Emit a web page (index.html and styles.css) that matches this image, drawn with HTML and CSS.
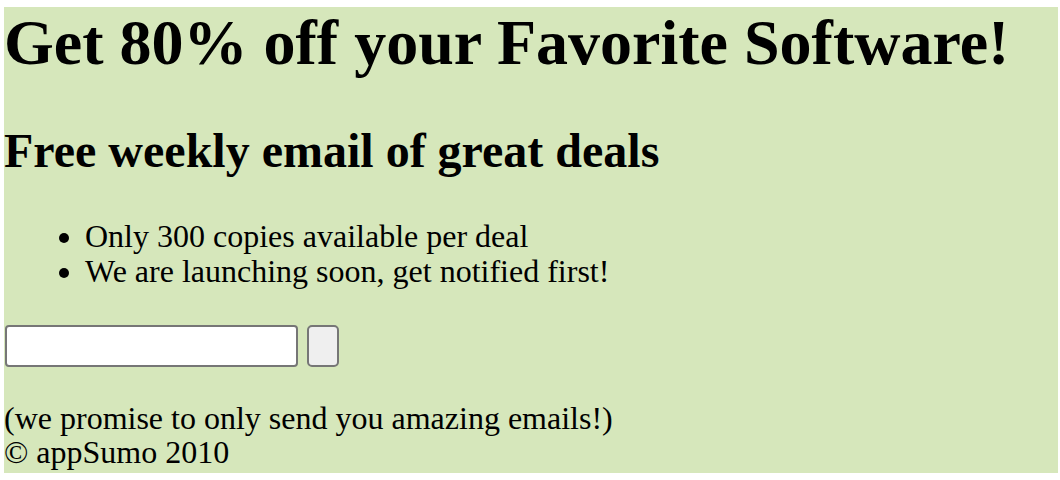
FILE: index.html
```html
<!DOCTYPE html>
<html lang="en">
<head>
    <meta charset="UTF-8">
    <title>appSumo - Get 80% off your Favorite Software!</title>
    <link rel="stylesheet" href="styles.css">
</head>
<body>
    <div class="page">
        <h1>Get 80% off your Favorite Software!</h1>
        <h2>Free weekly email of great deals</h2>
        <ul class="perks">
            <li>Only 300 copies available per deal</li>
            <li>We are launching soon, get notified first!</li>
        </ul>
        <form class="signup" onsubmit="return false;">
            <input type="text" class="email-input" name="email">
            <button type="submit" class="signup-btn"></button>
        </form>
        <p class="footer">
            (we promise to only send you amazing emails!)<br>
            &copy; appSumo 2010
        </p>
    </div>
</body>
</html>
```

FILE: styles.css
```css
body {
    margin: 7px 2px 0 4px;
    font-family: 'Liberation Serif', 'Times New Roman', serif;
    color: #000;
    background-color: #fff;
}
.page {
    background-color: #d6e7bb;
    padding-bottom: 4px;
}
h1 {
    font-size: 64px;
    line-height: 72px;
    margin: 0 0 46px;
}
h2 {
    font-size: 48px;
    line-height: 52px;
    margin: 0 0 42px;
}
.perks {
    font-size: 32px;
    line-height: 35px;
    margin: 0 0 36px;
    padding-left: 81px;
}
.signup {
    display: flex;
    gap: 9px;
    margin: 0;
    padding-left: 1px;
}
.email-input {
    width: 293px;
    height: 42px;
    box-sizing: border-box;
    border: 2px solid #767676;
    border-radius: 4px;
    background-color: #fff;
    padding: 0 4px;
}
.signup-btn {
    width: 32px;
    height: 42px;
    box-sizing: border-box;
    border: 2px solid #767676;
    border-radius: 5px;
    background-color: #efefef;
    padding: 0;
}
.footer {
    font-size: 32px;
    line-height: 34px;
    margin: 34px 0 0;
}
```
